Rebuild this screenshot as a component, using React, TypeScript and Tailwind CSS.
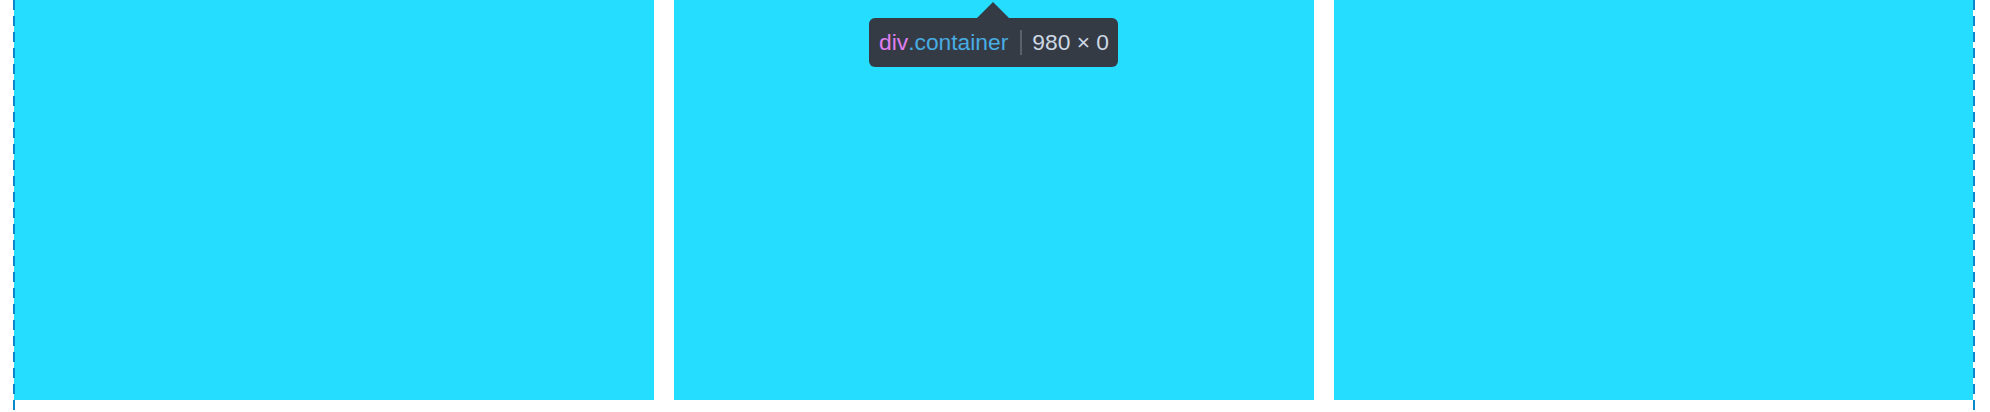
import React from "react";

export default function App() {
  return (
    <div className="relative h-[412px] w-[1990px] overflow-hidden bg-white">
      <div className="flex gap-[20px] pl-[14px]">
        <div className="h-[400px] w-[640px] bg-[#24ddff]" />
        <div className="h-[400px] w-[640px] bg-[#24ddff]" />
        <div className="h-[400px] w-[639px] bg-[#24ddff]" />
      </div>

      {/* guide lines */}
      <div className="absolute left-[13px] top-0 h-[412px] w-[2px] bg-[repeating-linear-gradient(to_bottom,#0a88c9_0px,#0a88c9_10px,transparent_10px,transparent_16px)]" />
      <div className="absolute left-[1973px] top-0 h-[412px] w-[2px] bg-[repeating-linear-gradient(to_bottom,#0a88c9_0px,#0a88c9_10px,transparent_10px,transparent_16px)]" />

      {/* infobar */}
      <div className="absolute left-[977px] top-[2px] h-0 w-0 border-x-[16px] border-b-[16px] border-x-transparent border-b-[#353b45]" />
      <div
        className="absolute left-[869px] top-[18px] flex h-[49px] items-center rounded-[6px] bg-[#353b45] pl-[10px] pr-[9px] text-[22.8px] leading-none whitespace-nowrap"
        style={{ fontFamily: '"Liberation Sans", Arial, sans-serif' }}
      >
        <span className="text-[#df7ff2]">div</span>
        <span className="text-[#48ade3]">.container</span>
        <span className="ml-[12px] mr-[10px] h-[25px] w-[2px] bg-[#5a6169]" />
        <span className="text-[#cdd9e4]">980 × 0</span>
      </div>
    </div>
  );
}
